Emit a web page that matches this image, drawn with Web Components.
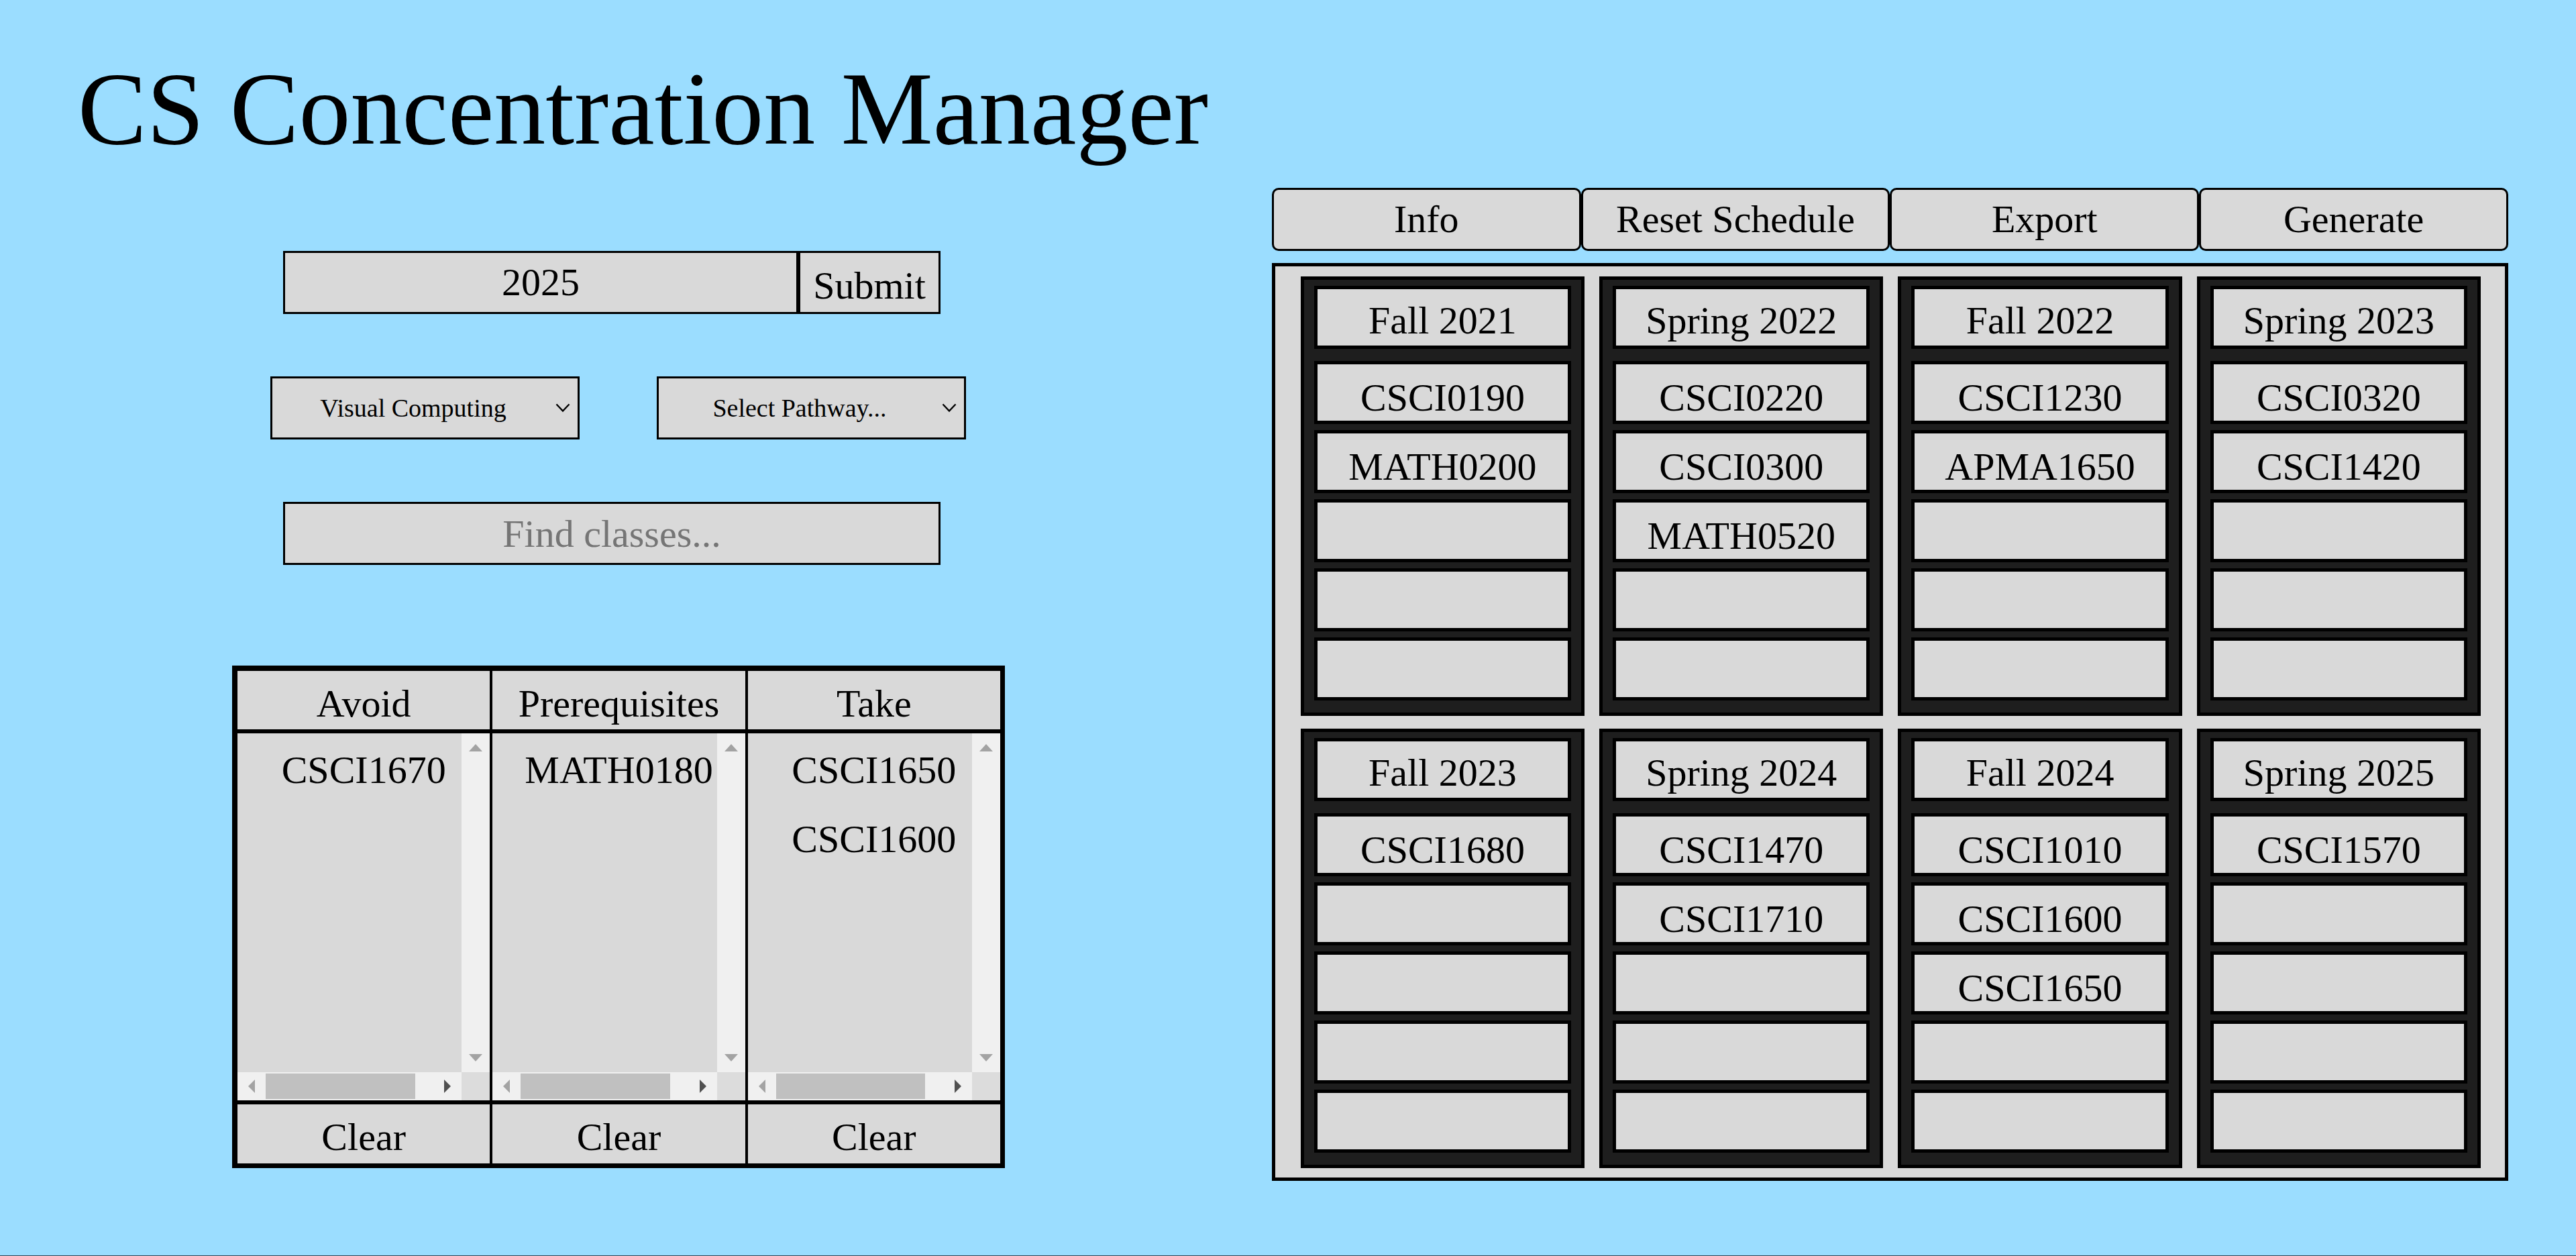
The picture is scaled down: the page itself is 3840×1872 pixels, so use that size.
<!DOCTYPE html>
<html lang="en">
<head>
<meta charset="utf-8">
<title>CS Concentration Manager</title>
<style>
  :root { --surface: #d9d9d9; --sky: #9bddff; --column: #1e1e1e; --control: 94px; }
  * { box-sizing: border-box; }
  html, body { height: 100%; }
  body {
    margin: 0; background: var(--sky); color: #000;
    font: 58px/66px "Liberation Serif", "Times New Roman", serif;
  }
</style>
</head>
<body>
<cs-app></cs-app>

<script>
const BASE = `
  *, *::before { box-sizing: border-box; }
  button, input, select { font: inherit; color: inherit; margin: 0; border-radius: 0; background: var(--surface); min-width: 0; }
`;

class Base extends HTMLElement {
  connectedCallback() {
    if (this.shadowRoot) return;
    this.attachShadow({ mode: 'open' }).innerHTML = `<style>${BASE}${this.css()}</style>${this.html()}`;
  }
}

customElements.define('year-form', class extends Base {
  css() { return `
    :host { display: block; }
    form { display: flex; margin: 0; height: var(--control); }
    input, button { border: 3px solid #000; padding: 0; text-align: center; }
    input { flex: 1; }
    button { width: 212px; padding-top: 10px; }
  `; }
  html() { return `
    <form onsubmit="return false">
      <input type="text" aria-label="Graduation year" value="2025">
      <button type="submit">Submit</button>
    </form>`; }
});

customElements.define('pathway-select', class extends Base {
  css() { return `
    :host { display: grid; flex: 1; height: var(--control); }
    select, svg { grid-area: 1 / 1; }
    select {
      appearance: none; border: 3px solid #000; padding: 0 35px 0 0;
      width: 100%; font-size: 38px; line-height: 44px; text-align: center; text-align-last: center;
    }
    svg { align-self: center; justify-self: end; margin-right: 14px; pointer-events: none; }
  `; }
  html() {
    const value = this.getAttribute('value');
    return `
      <select aria-label="${this.getAttribute('label')}"><option>${value}</option></select>
      <svg width="22" height="14" viewBox="0 0 22 14" fill="none" stroke="#000" stroke-width="2.4"><path d="M1.500 1.500 11 11.500 20.500 1.500"/></svg>`;
  }
});

customElements.define('class-search', class extends Base {
  css() { return `
    :host { display: block; }
    input { display: block; width: 100%; height: var(--control); border: 3px solid #000; padding: 0; text-align: center; }
    input::placeholder { color: #757575; opacity: 1; }
  `; }
  html() { return `<input type="text" aria-label="Find classes" placeholder="Find classes...">`; }
});

customElements.define('scroll-pane', class extends Base {
  css() { return `
    :host { display: grid; grid-template: minmax(0, 1fr) 42px / minmax(0, 1fr) 42px; background: var(--surface); }
    .view { overflow: hidden; }
    .view > div { width: calc(100% + 42px); }
    .bar { display: flex; justify-content: space-between; background: #f0f0f0; }
    .v { flex-direction: column; }
    .track { flex: 1; padding: 2px 0; }
    .thumb { width: 89%; height: 100%; background: #c0c0c0; }
    .corner { background: #dcdcdc; }
    svg { display: block; width: 42px; height: 42px; fill: #a3a3a3; }
    svg.on { fill: #505050; }
  `; }
  html() { return `
    <div class="view"><div><slot></slot></div></div>
    <div class="bar v">
      <svg viewBox="0 0 42 42"><path d="M11 27 21 16 31 27Z"/></svg>
      <svg viewBox="0 0 42 42"><path d="M11 15 21 26 31 15Z"/></svg>
    </div>
    <div class="bar">
      <svg viewBox="0 0 42 42"><path d="M26 11 16 21 26 31Z"/></svg>
      <div class="track"><div class="thumb"></div></div>
      <svg class="on" viewBox="0 0 42 42"><path d="M16 11 26 21 16 31Z"/></svg>
    </div>
    <div class="corner"></div>`; }
});

customElements.define('class-list', class extends Base {
  css() { return `
    :host { display: grid; grid-template-rows: 87px 547px 88px; row-gap: 6px; min-width: 0; }
    h2, button { margin: 0; padding: 10px 0 0; border: 0; background: var(--surface); font: inherit; }
    h2 { display: flex; align-items: center; justify-content: center; }
    .item { display: flex; align-items: center; justify-content: center; height: 94px; margin-bottom: 9px; padding-top: 16px; }
  `; }
  html() {
    const items = this.getAttribute('items').split(' ');
    return `
      <h2>${this.getAttribute('heading')}</h2>
      <scroll-pane>${items.map(i => `<div class="item">${i}</div>`).join('')}</scroll-pane>
      <button type="button">Clear</button>`;
  }
});

customElements.define('semester-column', class extends Base {
  css() { return `
    :host { display: flex; flex-direction: column; gap: 9px; min-width: 0; border: 5px solid #000; background: var(--column); padding: 9px 15px 18px; }
    h3, div { display: flex; align-items: center; justify-content: center; height: 94px; margin: 0; border: 5px solid #000; background: var(--surface); font: inherit; white-space: nowrap; }
    h3 { padding-top: 10px; margin-bottom: 9px; }
    div { padding-top: 16px; }
  `; }
  html() {
    const items = this.getAttribute('items').split(' ');
    const slots = Array.from({ length: 5 }, (_, i) => `<div>${items[i] || ''}</div>`).join('');
    return `<h3>${this.getAttribute('heading')}</h3>${slots}`;
  }
});

customElements.define('action-bar', class extends Base {
  css() { return `
    :host { display: grid; grid-template-columns: repeat(4, minmax(0, 1fr)); }
    button { height: var(--control); border: 3px solid #000; border-radius: 10px; padding: 0; white-space: nowrap; }
  `; }
  html() {
    return ['Info', 'Reset Schedule', 'Export', 'Generate'].map(t => `<button type="button">${t}</button>`).join('');
  }
});

customElements.define('schedule-board', class extends Base {
  css() { return `
    :host {
      display: grid; grid-template-columns: repeat(4, minmax(0, 1fr)); gap: 19px 22px;
      padding: 15px 36px 14px 38px; border: 5px solid #000; background: var(--surface);
    }
  `; }
  html() {
    return [
      ['Fall 2021', 'CSCI0190 MATH0200'],
      ['Spring 2022', 'CSCI0220 CSCI0300 MATH0520'],
      ['Fall 2022', 'CSCI1230 APMA1650'],
      ['Spring 2023', 'CSCI0320 CSCI1420'],
      ['Fall 2023', 'CSCI1680'],
      ['Spring 2024', 'CSCI1470 CSCI1710'],
      ['Fall 2024', 'CSCI1010 CSCI1600 CSCI1650'],
      ['Spring 2025', 'CSCI1570'],
    ].map(([h, i]) => `<semester-column heading="${h}" items="${i}"></semester-column>`).join('');
  }
});

customElements.define('cs-app', class extends Base {
  css() { return `
    :host {
      display: grid; grid-template-columns: 30vw 48vw; justify-content: space-between; align-content: start;
      box-sizing: border-box; min-height: 100%; padding: 74px 101px 0 346px; border-bottom: 1px solid #3c4654;
    }
    h1 { grid-column: 1 / -1; margin: 0 0 0 -230px; height: 206px; font-size: 154px; line-height: 176px; font-weight: normal; white-space: nowrap; }
    main { display: contents; }
    .plan { display: flex; flex-direction: column; padding-top: 94px; gap: 93px; }
    year-form, class-search { margin: 0 96px 0 76px; }
    .paths { display: flex; gap: 115px; margin: 0 58px 0 57px; }
    .lists { display: grid; grid-template-columns: repeat(3, minmax(0, 1fr)); gap: 4px; margin-top: 57px; padding: 8px 7px 7px 8px; background: #000; }
    .board { display: flex; flex-direction: column; gap: 18px; }
  `; }
  html() { return `
    <h1>CS Concentration Manager</h1>
    <main>
      <section class="plan">
        <year-form></year-form>
        <div class="paths">
          <pathway-select label="First pathway" value="Visual Computing"></pathway-select>
          <pathway-select label="Second pathway" value="Select Pathway..."></pathway-select>
        </div>
        <class-search></class-search>
        <div class="lists">
          <class-list heading="Avoid" items="CSCI1670"></class-list>
          <class-list heading="Prerequisites" items="MATH0180"></class-list>
          <class-list heading="Take" items="CSCI1650 CSCI1600"></class-list>
        </div>
      </section>
      <section class="board">
        <action-bar></action-bar>
        <schedule-board></schedule-board>
      </section>
    </main>`; }
});
</script>
</body>
</html>
